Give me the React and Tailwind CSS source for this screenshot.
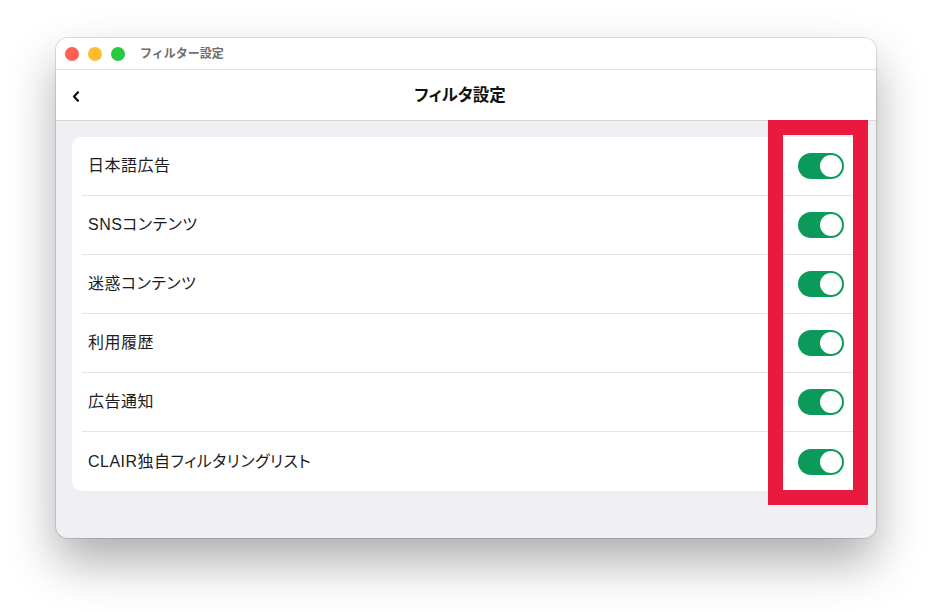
const rows = [
  "日本語広告",
  "SNSコンテンツ",
  "迷惑コンテンツ",
  "利用履歴",
  "広告通知",
  "CLAIR独自フィルタリングリスト",
]

function Toggle() {
  return (
    <div className="w-[46px] h-[26px] rounded-full bg-[#0c9a5b] flex items-center justify-end px-[2px]">
      <div className="w-[22px] h-[22px] rounded-full bg-white" />
    </div>
  )
}

export default function App() {
  return (
    <div className="relative w-[932px] h-[612px] bg-white pt-[38px] pl-[56px] font-['Liberation_Sans','Noto_Sans_CJK_JP',sans-serif]">
      {/* Window */}
      <div className="w-[820px] h-[500px] rounded-[12px] overflow-hidden flex flex-col bg-[#efeff4] shadow-[0_0_0_1px_rgba(0,0,0,0.12),0_24px_48px_rgba(0,0,0,0.32)]">
        {/* Title bar */}
        <div className="h-[32px] bg-white border-b border-[#e2e2e2] flex items-center pl-[9px] gap-[9px]">
          <div className="w-[14px] h-[14px] rounded-full bg-[#fe5f57]" />
          <div className="w-[14px] h-[14px] rounded-full bg-[#febc2e]" />
          <div className="w-[14px] h-[14px] rounded-full bg-[#28c840]" />
          <span className="ml-[6px] text-[12px] font-bold text-[#6e6e6e]">フィルター設定</span>
        </div>

        {/* Nav bar */}
        <div className="relative h-[51px] bg-white border-b border-[#d6d6d8] flex items-center justify-center">
          <svg className="absolute left-[16px] top-[21px]" width="8" height="11" viewBox="0 0 8 11" fill="none">
            <path d="M6 1.2L2 5.5l4 4.3" stroke="#111" strokeWidth="2.2" strokeLinecap="round" strokeLinejoin="round" />
          </svg>
          <span className="mr-[12px] text-[16.5px] font-bold text-[#111] [font-feature-settings:'palt']">フィルタ設定</span>
        </div>

        {/* Content */}
        <div className="flex-1 pt-[16px] pl-[16px] pr-[16px]">
          <div className="bg-white rounded-[10px] pl-[10px]">
            {rows.map((label, i) => (
              <div
                key={label}
                className={`h-[59px] flex items-center justify-between pl-[6px] pr-[16px] ${i < rows.length - 1 ? "border-b border-[#e4e4e6]" : ""}`}
              >
                <span className="text-[16px] tracking-[0.03em] text-[#1c1c1e] [font-feature-settings:'palt']">{label}</span>
                <Toggle />
              </div>
            ))}
          </div>
        </div>
      </div>

      {/* Highlight frame */}
      <div className="absolute left-[768px] top-[120px] w-[100px] h-[385px] border-[15px] border-[#e9193f]" />
    </div>
  )
}
